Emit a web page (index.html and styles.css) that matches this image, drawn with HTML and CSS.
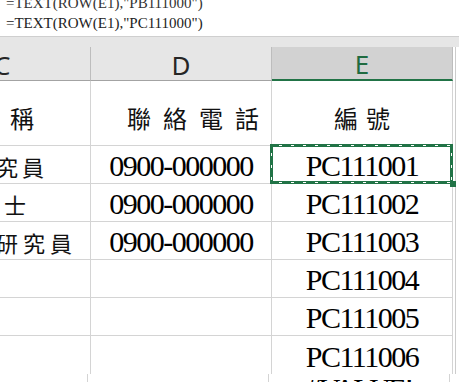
FILE: index.html
```html
<!DOCTYPE html>
<html lang="zh-Hant">
<head>
    <meta charset="UTF-8">
    <meta name="viewport" content="width=device-width, initial-scale=1.0">
    <title>編號</title>
    <link rel="stylesheet" href="styles.css">
</head>
<body>
    <div class="formula">
        <div class="f1">=TEXT(ROW(E1),"PB111000")</div>
        <div class="f2">=TEXT(ROW(E1),"PC111000")</div>
    </div>
    <div class="band"></div>
    <div class="sheet">
        <!-- column letters -->
        <div class="col c"><span class="cut-c">C</span></div>
        <div class="col">D</div>
        <div class="col on">E</div>
        <div class="edge"></div>

        <!-- title row -->
        <div class="title c"><span class="cut-t">名稱</span></div>
        <div class="title left"><span class="t-d">聯絡電話</span></div>
        <div class="title"><span class="t-e">編號</span></div>
        <div class="edge"></div>

        <div class="cjk c"><span class="cut-2">研究員</span></div>
        <div class="num">0900-000000</div>
        <div class="num sel">PC111001</div>
        <div class="edge"></div>

        <div class="cjk c"><span class="cut-3">博士</span></div>
        <div class="num">0900-000000</div>
        <div class="num">PC111002</div>
        <div class="edge"></div>

        <div class="cjk c"><span class="cut-4">研究員</span></div>
        <div class="num">0900-000000</div>
        <div class="num">PC111003</div>
        <div class="edge"></div>

        <div class="c"></div>
        <div></div>
        <div class="num">PC111004</div>
        <div class="edge"></div>

        <div class="c"></div>
        <div></div>
        <div class="num">PC111005</div>
        <div class="edge"></div>

        <div class="c last"></div>
        <div class="last"></div>
        <div class="num last">PC111006</div>
        <div class="edge"></div>
    </div>
    <div class="lower">
        <div></div>
        <div></div>
        <div class="err">#VALUE!</div>
    </div>
</body>
</html>
```

FILE: styles.css
```css
*{
    margin: 0;
    padding: 0;
    box-sizing: border-box;
}
html, body{
    overflow: hidden;
    background: #fff;
}
body{
    width: 459px;
    height: 382px;
    font-family: "Liberation Serif", "Noto Sans CJK TC", serif;
    color: #111;
}

/* formula bar remnants at the top */
.formula{
    height: 36px;
    padding-left: 6px;
    font-size: 15px;
    line-height: 18px;
    color: #222;
    overflow: hidden;
    white-space: nowrap;
}
.formula .f1{
    margin-top: -6px;
    margin-bottom: 2px;
    color: #333;
}

.band{
    height: 11px;
    background: #e6e6e6;
    border-top: 1px solid #cfcfcf;
}

.sheet{
    display: grid;
    grid-template-columns: 91px 181px 181px 6px;
    grid-template-rows: 34px 65px repeat(6, 38px);
}
.sheet > div{
    display: flex;
    align-items: center;
    justify-content: center;
    border-right: 1px solid #d4d4d4;
    border-bottom: 1px solid #d4d4d4;
    white-space: nowrap;
    overflow: hidden;
}
.sheet > .edge{
    border: 0;
    background: linear-gradient(90deg, transparent 2px, #cccccc 2px 3px, transparent 3px);
}
.sheet > .last{
    border-bottom: 0;
}
.sheet > .c{
    justify-content: flex-start;
}

/* column letters */
.sheet > .col{
    background: #e6e6e6;
    border-right-color: #bdbdbd;
    border-bottom-color: #a3a3a3;
    font-family: "Noto Sans", sans-serif;
    font-size: 26px;
    line-height: 34px;
    color: #262626;
    padding-top: 2px;
}
.sheet > .col.on{
    background: #d2d2d2;
    color: #1f6b40;
    border-bottom: 2px solid #217346;
}
.cut-c{
    margin-left: -6px;
}

/* title row */
.sheet > .title{
    font-family: "Noto Sans CJK TC", sans-serif;
    font-size: 24px;
    padding-top: 8px;
}
.sheet > .title.left{
    justify-content: flex-start;
    padding-left: 36px;
}
.t-d{
    letter-spacing: 12px;
}
.t-e{
    letter-spacing: 8px;
    margin-left: 8px;
}
.cut-t{
    letter-spacing: 12px;
    margin-left: -26px;
}

/* data rows */
.sheet > .cjk{
    font-family: "Noto Sans CJK TC", sans-serif;
    font-size: 22px;
    padding-top: 3px;
}
.cut-2{
    letter-spacing: 4px;
    margin-left: -30px;
}
.cut-3{
    letter-spacing: 6px;
    margin-left: -24px;
}
.cut-4{
    letter-spacing: 5px;
    margin-left: -4px;
}
.sheet > .num{
    font-size: 30px;
    line-height: 34px;
    letter-spacing: -1.5px;
    padding-top: 3px;
    color: #000;
}

/* selected cell with copy marquee */
.sheet > .sel{
    position: relative;
    overflow: visible;
}
.sel::after{
    content: '';
    position: absolute;
    top: -2px;
    left: -2px;
    right: -1px;
    bottom: -1px;
    background:
        repeating-linear-gradient(90deg, transparent 0 9px, #fff 9px 12px) 0 1px / 100% 1px no-repeat,
        repeating-linear-gradient(90deg, transparent 0 9px, #fff 9px 12px) 0 calc(100% - 1px) / 100% 1px no-repeat,
        repeating-linear-gradient(180deg, transparent 0 9px, #fff 9px 12px) 1px 0 / 1px 100% no-repeat,
        repeating-linear-gradient(180deg, transparent 0 9px, #fff 9px 12px) calc(100% - 1px) 0 / 1px 100% no-repeat,
        linear-gradient(#217346, #217346) top / 100% 3px no-repeat,
        linear-gradient(#217346, #217346) bottom / 100% 3px no-repeat,
        linear-gradient(#217346, #217346) left / 3px 100% no-repeat,
        linear-gradient(#217346, #217346) right / 3px 100% no-repeat;
}
.sel::before{
    content: '';
    position: absolute;
    right: -4px;
    bottom: -4px;
    width: 6px;
    height: 6px;
    background: #217346;
    z-index: 1;
}

/* pasted strip at the bottom */
.lower{
    display: grid;
    grid-template-columns: 88px 181px 181px;
    height: 9px;
    overflow: hidden;
}
.lower > div{
    border-right: 1px solid #d4d4d4;
    overflow: hidden;
}
.lower .err{
    text-align: center;
    font-size: 30px;
    line-height: 30px;
    letter-spacing: -2.5px;
    padding-top: 0;
    color: #000;
}
```
